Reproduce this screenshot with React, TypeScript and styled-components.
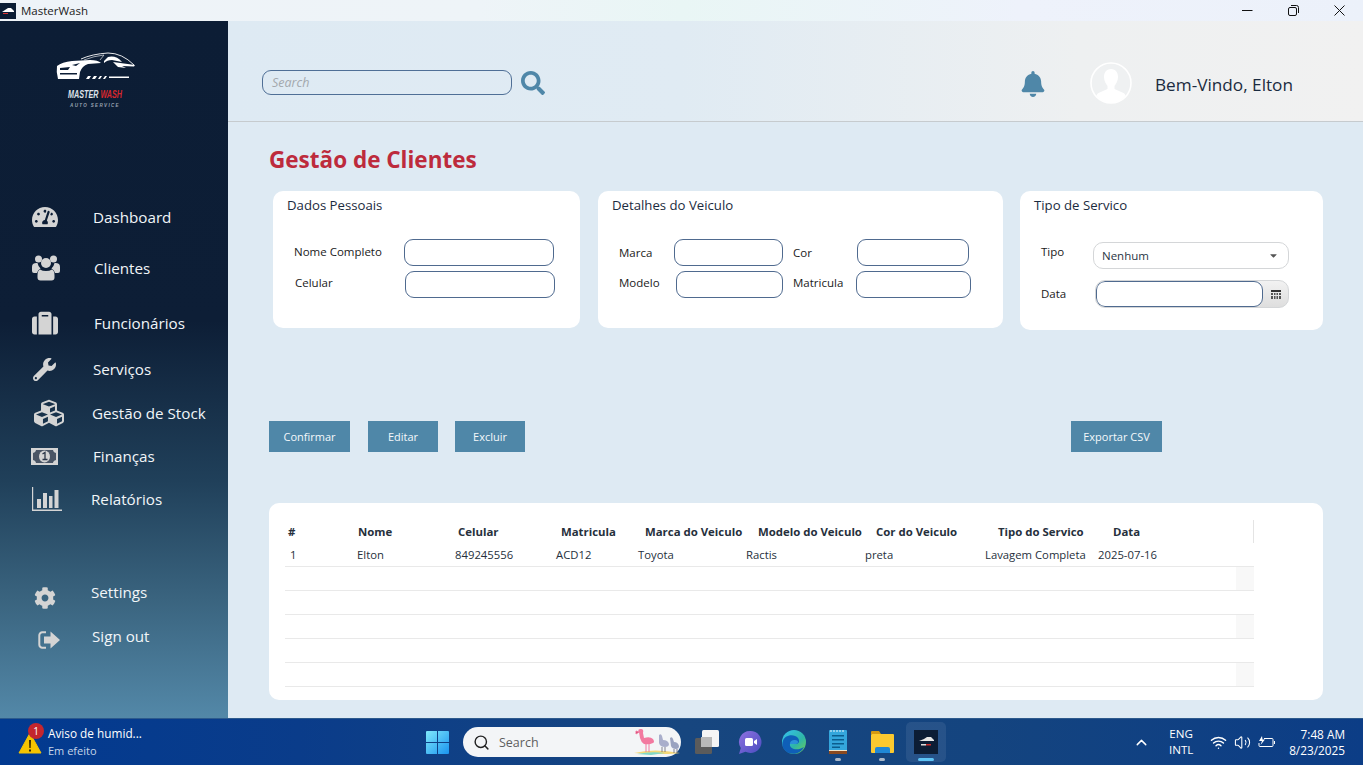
import React from "react";
import styled, { createGlobalStyle } from "styled-components";
import {
  FaTachometerAlt, FaSuitcase, FaWrench, FaCubes,
  FaCog, FaBell, FaSearch, FaCaretDown,
} from "react-icons/fa";
import { Search as LSearch, ChevronUp, Wifi, Volume2 } from "lucide-react";

const Global = createGlobalStyle`
  html, body { margin: 0; padding: 0; height: 100%; overflow: hidden; }
  body { font-family: "Open Sans", "Noto Sans", "Liberation Sans", sans-serif; }
  * { box-sizing: border-box; }
`;

const Win = styled.div`display:flex;flex-direction:column;width:1363px;height:765px;overflow:hidden;`;
const TitleBar = styled.div`
  height:21px;flex:none;display:flex;align-items:center;color:#1a1a1a;font-size:11.5px;
  background:linear-gradient(90deg,#eef3f8 0%,#eef4f8 35%,#e9f6f5 50%,#eef2fb 75%,#ecf1fa 100%);
`;
const TitleLogo = styled.div`width:16px;height:16px;margin-right:5px;background:#0c1d35;display:flex;align-items:center;justify-content:center;`;
const WinControls = styled.div`margin-left:auto;display:flex;margin-right:1px;`;
const WinBtn = styled.div`width:46px;height:21px;display:flex;align-items:center;justify-content:center;color:#111;`;
const Body = styled.div`flex:1;display:flex;min-height:0;`;

const Sidebar = styled.aside`
  width:228px;flex:none;
  background:linear-gradient(180deg,#0c1d35 0%,#0d1e36 43%,#20405a 66%,#3a647f 83%,#5388a8 100%);
`;
const LogoBlock = styled.div`height:178px;padding:31px 0 0 56px;`;
const LogoMaster = styled.div`
  width:78px;margin-top:2px;text-align:center;font:italic 700 10px/11px "Liberation Sans",sans-serif;color:#dfe3ea;white-space:nowrap;
  transform:scaleX(.72);
  span{color:#d8262c;}
`;
const LogoSub = styled.div`
  width:78px;margin-top:1px;text-align:center;font:italic 700 4.5px/9px "Liberation Sans",sans-serif;color:#9aa3b2;letter-spacing:1.35px;white-space:nowrap;
`;
const Nav = styled.nav`display:flex;flex-direction:column;`;
const NavItem = styled.div<{ $gap: number }>`
  height:36px;display:flex;align-items:center;margin-top:${p => p.$gap}px;color:#f1f5f8;font-size:15.2px;white-space:nowrap;
`;
const NavIcon = styled.div<{ $drop?: number; $x: number }>`
  width:90px;flex:none;display:flex;align-items:center;color:#d4d4d4;
  padding-left:${p => p.$x}px;margin-top:${p => (p.$drop || 0) * 2}px;
`;
const NavLabel = styled.span<{ $x: number }>`margin-left:${p => p.$x}px;`;

const Main = styled.main`flex:1;display:flex;flex-direction:column;background:#deeaf3;min-width:0;`;
const Header = styled.header`
  height:101px;flex:none;display:flex;align-items:center;padding:23px 70px 0 34px;
  border-bottom:1px solid #c6cbce;
  background:linear-gradient(90deg,#deeaf3 0%,#e0ebf3 40%,#eef0f1 75%,#f1f1f1 100%);
`;
const SearchField = styled.div`
  width:250px;height:25px;border:1px solid #4f6f96;border-radius:9px;padding-left:9px;
  font-size:12.5px;font-style:italic;color:#a3a8ad;display:flex;align-items:center;
`;
const SearchBtn = styled.div`margin-left:9px;color:#4f87a8;display:flex;`;
const HeaderRight = styled.div`margin-left:auto;display:flex;align-items:center;`;
const BellWrap = styled.div`color:#4f87a8;display:flex;margin:2px 44px 0 0;`;
const Avatar = styled.div`width:42px;height:42px;display:flex;margin-right:23px;`;
const Welcome = styled.div`font-size:17.2px;color:#1b2b40;white-space:nowrap;margin-top:3px;`;

const Content = styled.div`flex:1;padding:22px 40px 0 41px;display:flex;flex-direction:column;`;
const PageTitle = styled.h1`margin:0;height:32px;font-size:22.5px;line-height:32px;font-weight:700;color:#bd2b3c;`;
const Cards = styled.div`display:flex;align-items:flex-start;margin:15px 0 0 4px;`;
const Card = styled.section<{ $w: number; $h: number; $ml?: number }>`
  width:${p => p.$w}px;height:${p => p.$h}px;background:#fff;border-radius:10px;padding:5px 0 0 14px;flex:none;
  margin-left:${p => p.$ml || 0}px;
`;
const CardTitle = styled.div`font-size:13.2px;line-height:18px;color:#1b2b40;white-space:nowrap;`;
const Rows = styled.div<{ $top: number }>`margin:${p => p.$top}px 0 0 7px;display:flex;flex-direction:column;`;
const Row = styled.div<{ $gap?: number }>`display:flex;align-items:center;margin-top:${p => p.$gap || 0}px;`;
const Label = styled.label<{ $w: number; $up?: number; $ind?: number }>`
  width:${p => p.$w}px;flex:none;font-size:11.5px;color:#1a1a1a;white-space:nowrap;
  margin-bottom:${p => p.$up || 0}px;padding-left:${p => p.$ind || 0}px;
`;
const Field = styled.div<{ $w: number }>`width:${p => p.$w}px;height:27px;flex:none;border:1px solid #4f6a8f;border-radius:9px;background:#fff;margin-right:10px;`;
const Select = styled.div`
  width:196px;height:27px;border:1px solid #d4d6d8;border-radius:10px;display:flex;align-items:center;
  padding:0 9px 0 8px;font-size:11.5px;color:#2a3644;justify-content:space-between;
`;
const DateBox = styled.div`
  width:194px;height:28px;margin-left:2px;border:1px solid #d4d6d8;border-radius:10px;display:flex;overflow:hidden;
  background:linear-gradient(180deg,#f2f2f2,#dedede);
`;
const DateInput = styled.div`width:167px;height:26px;border:1px solid #4f6a8f;border-radius:9px;background:#fff;flex:none;`;
const DateBtn = styled.div`flex:1;display:flex;align-items:center;justify-content:center;`;

const Actions = styled.div`display:flex;margin-top:91px;`;
const Btn = styled.button<{ $w: number; $ml?: number; $end?: boolean }>`
  width:${p => p.$w}px;height:31px;border:0;background:#4f87a8;color:#f4f8fb;font:400 11px "Open Sans",sans-serif;padding:0;
  margin-left:${p => p.$end ? "auto" : `${p.$ml || 0}px`};
  ${p => p.$end ? "margin-right:161px;" : ""}
`;
const TableCard = styled.section`margin-top:51px;height:197px;background:#fff;border-radius:10px;padding:17px 0 0 16px;`;
const Table = styled.div`width:969px;`;
const HeadRow = styled.div`
  height:23px;display:grid;grid-template-columns:70px 100px 103px 84px 113px 118px 122px 115px 1fr;padding-left:3px;align-items:center;
  font-size:11.4px;font-weight:700;color:#26303c;white-space:nowrap;border-right:1px solid #e4e4e4;
`;
const TRow = styled.div`
  height:24px;display:grid;grid-template-columns:67px 98px 101px 82px 108px 119px 120px 113px 1fr 18px;padding-left:5px;align-items:center;
  font-size:11.3px;color:#26303c;white-space:nowrap;border-bottom:1px solid #e9e9e9;
`;
const Filler = styled.div<{ $on?: boolean }>`grid-column:10;height:100%;background:${p => p.$on ? "#f8f8f8" : "transparent"};`;

const Taskbar = styled.footer`
  height:47px;flex:none;display:flex;align-items:center;color:#fff;border-top:1px solid #2d5a8c;
  background:linear-gradient(90deg,#023a90 0%,#0a3c8a 22%,#17467f 50%,#14447f 72%,#0c3d86 100%);
`;
const Weather = styled.div`width:415px;flex:none;display:flex;align-items:center;padding-left:18px;`;
const WarnWrap = styled.div`position:relative;width:24px;height:24px;margin-right:6px;margin-top:3px;`;
const WarnBadge = styled.div`
  position:absolute;left:10px;top:-9px;width:16px;height:16px;border-radius:50%;background:#c4262e;font-size:10px;line-height:16px;text-align:center;
`;
const WeatherText = styled.div`font-size:11.8px;line-height:17px;white-space:nowrap;span{display:block;color:#c6d6e8;font-size:11px;}`;
const TaskSlot = styled.div<{ $w?: number }>`width:${p => p.$w || 44}px;height:40px;flex:none;display:flex;align-items:center;justify-content:center;position:relative;`;
const TaskActive = styled(TaskSlot)`background:rgba(255,255,255,.08);border-radius:5px;width:40px;margin:0 2px;`;
const Dot = styled.i<{ $active?: boolean }>`
  position:absolute;bottom:1px;left:50%;transform:translateX(-50%);height:3px;border-radius:2px;
  width:${p => p.$active ? 16 : 6}px;background:${p => p.$active ? "#5ec4f5" : "#a9b8ca"};
`;
const SearchPill = styled.div`
  width:218px;height:30px;margin:0 5px 0 4px;border-radius:15px;background:#f3f5f7;flex:none;display:flex;align-items:center;padding:0 0 0 10px;color:#5e5e5e;font-size:12.5px;
  svg.lens{color:#222;margin-right:9px;}
  svg.fl{margin-left:auto;}
`;
const Tray = styled.div`margin-left:auto;display:flex;align-items:center;padding-right:18px;`;
const Lang = styled.div`width:40px;margin:0 9px 0 11px;text-align:center;font-size:11.6px;line-height:16px;`;
const TrayIcons = styled.div`display:flex;align-items:center;gap:7px;margin-right:14px;`;
const Clock = styled.div`text-align:right;font-size:11.8px;line-height:16px;white-space:nowrap;`;
const Chevron = styled.div`display:flex;`;

const MiniCar = () => (
  <svg width="14" height="9" viewBox="0 0 14 9"><path d="M1 6l3-2 3-2h3l3 3v1H1z" fill="#fff" /><rect x="2" y="7" width="5" height="1" fill="#d33" /></svg>
);
const Car = () => (
  <svg width="80" height="30" viewBox="56 52 80 30" fill="none">
    <path d="M57 66Q62 62 72 61L90 60Q98 60 101 63L88 64Q82 66 80 72L79 79L58 79Q56 72 57 66Z" fill="#fff" />
    <path d="M60 68L70 67L68 70L60 70ZM60 73H77V74.500H60ZM72 65L80 63L76 66Z" fill="#0c1d35" />
    <path d="M81 59Q92 54 108 53Q122 53 134 65" stroke="#fff" strokeWidth=".9" />
    <path d="M84 60Q94 56 104 55L100 60" stroke="#fff" strokeWidth=".6" />
    <path d="M104 61L108 57Q116 55 122 62L112 60Q107 60 104 63Z" fill="#fff" />
    <path d="M113 62L135 65L134 66.500L122 66L126 68L118 67Z" fill="#fff" />
    <path d="M86 79l2-3h3l-2 3zM92 79l2-3h3l-2 3zM98 79l2-3h2l-2 3zM103 79l2-3h2l-2 3zM109 76.500h20v1.500h-20z" fill="#fff" />
  </svg>
);
const UserPic = () => (
  <svg width="42" height="42" viewBox="0 0 42 42">
    <circle cx="21" cy="21" r="20" fill="#eff1f2" stroke="#fff" strokeWidth="1.6" />
    <path d="M21 7c5 0 7 4 7 8 0 4-2 7-3.500 9v3l9 4c1 .5 2 2 2 3a19 19 0 0 1-29 0c0-1 1-2.500 2-3l9-4v-3C16 22 14 19 14 15c0-4 2-8 7-8z" fill="#fff" />
  </svg>
);
const UsersIcon = () => (
  <svg width="28" height="26" viewBox="0 0 28 26" fill="currentColor">
    <circle cx="6.500" cy="4" r="3.500" /><circle cx="21.500" cy="4" r="3.500" /><circle cx="14" cy="8" r="5" />
    <path d="M1 9q2-1.500 4.500-1 .5 3 3 5.500-3 1.500-3.500 4.500H2q-2 0-2-2v-4q0-2 1-3zM27 9q-2-1.500-4.500-1-.5 3-3 5.500 3 1.500 3.500 4.500h3q2 0 2-2v-4q0-2-1-3z" />
    <path d="M8 14.500q2.500 1.500 6 1.500t6-1.500q2.500 1 2.500 6v2q0 3-3 3h-11q-3 0-3-3v-2q0-5 2.500-6z" />
  </svg>
);
const MoneyIcon = () => (
  <svg width="27" height="17" viewBox="0 0 27 17">
    <path fillRule="evenodd" fill="currentColor" d="M0 0h27v17H0zM5 2q0 3-3 3v7q3 0 3 3h17q0-3 3-3V5q-3 0-3-3z" />
    <path fill="#4a5565" d="M5 2h17q0 3 3 3v7q-3 0-3 3H5q0-3-3-3V5q3 0 3-3z" />
    <ellipse cx="13.500" cy="8.500" rx="5.500" ry="6" fill="currentColor" />
    <path d="M11.500 6l2.500-1.500v7M11.500 11.500h5" stroke="#2b3648" strokeWidth="1.300" fill="none" />
  </svg>
);
const ChartIcon = () => (
  <svg width="30" height="24" viewBox="0 0 30 24" fill="currentColor">
    <path d="M0 0h1.200v22.500H30V24H0z" />
    <rect x="5" y="12" width="4" height="9" /><rect x="11" y="6" width="4" height="15" />
    <rect x="17" y="9" width="3.500" height="12" /><rect x="22.500" y="3" width="4" height="18" />
  </svg>
);
const SignOutIcon = () => (
  <svg width="22" height="18" viewBox="0 0 22 18">
    <path d="M8 1.300H4.500A3 3 0 0 0 1.300 4.500v9a3 3 0 0 0 3.200 3.200H8" fill="none" stroke="currentColor" strokeWidth="2" />
    <path d="M6 5.500H12.500V.5l9.500 8.500-9.500 8.500v-5H6z" fill="currentColor" />
  </svg>
);
const GridIcon = () => (
  <svg width="10" height="9" viewBox="0 0 10 9">
    <rect width="10" height="2" fill="#333" />
    <path d="M0 3h2v2H0zM3 3h1.500v2H3zM5.500 3H7v2H5.500zM8 3h2v2H8zM0 6h2v3H0zM3 6h1.500v3H3zM5.500 6H7v3H5.500zM8 6h2v3H8z" fill="#555" />
  </svg>
);
const Warn = () => (
  <svg width="24" height="22" viewBox="0 0 24 22">
    <path d="M12 1L23 21H1z" fill="#f5c400" stroke="#f5c400" strokeLinejoin="round" />
    <path d="M11 8h2l-.3 8h-1.400zM11 17.500h2v2h-2z" fill="#3a2c00" />
  </svg>
);
const Start = () => (
  <svg width="23" height="23" viewBox="0 0 23 23">
    <defs><linearGradient id="st" x1="0" y1="0" x2="1" y2="1"><stop offset="0" stopColor="#7fe8fb" /><stop offset="1" stopColor="#1a94f0" /></linearGradient></defs>
    <path d="M1 0h10v11H0V1a1 1 0 0 1 1-1zM12 0h10a1 1 0 0 1 1 1v10H12zM0 12h11v11H1a1 1 0 0 1-1-1zM12 12h11v10a1 1 0 0 1-1 1H12z" fill="url(#st)" />
  </svg>
);
const Flamingo = () => (
  <svg className="fl" width="48" height="26" viewBox="0 0 48 26">
    <path d="M1 24q20-5 46 0q-12 2-46 0z" fill="#f5d878" />
    <path d="M4 25q14-3 28-1l-14 2z" fill="#7fd8c8" />
    <path d="M6 3q-2-3 2-3 3 0 2 4l1 5q6-2 9 1 2 3 0 4-4 2-9 1-3-2-4-6z" fill="#f279a0" />
    <path d="M3 2l3 1-3 2zM13 15v8M16 15v8" stroke="#f279a0" strokeWidth="1" fill="#c2385f" />
    <path d="M26 6q2-2 3 1l1 4q5 0 6 4 0 3-4 3-5 0-6-4z" fill="#a9aecb" />
    <path d="M29 18v5M32 18v5M41 20v4M44 20v4" stroke="#667" strokeWidth=".8" />
    <path d="M37 9q2-2 3 1l1 3q4 0 5 4 0 3-3 3-4 0-5-3z" fill="#9aa3c0" />
  </svg>
);
const TaskView = () => (
  <svg width="24" height="24" viewBox="0 0 24 24">
    <rect x="0" y="8" width="17" height="16" rx="1.500" fill="#5b5b5b" />
    <rect x="7" y="0" width="17" height="17" rx="1.500" fill="#f5f5f5" />
    <rect x="6" y="7" width="11" height="10" fill="#b9b9b9" />
  </svg>
);
const Meet = () => (
  <svg width="24" height="24" viewBox="0 0 24 24">
    <defs><linearGradient id="mt" x1="0" y1="0" x2="1" y2="1"><stop offset="0" stopColor="#8d72e0" /><stop offset="1" stopColor="#4a4cc0" /></linearGradient></defs>
    <path d="M12.500 1a11 11 0 1 1-5 20.800L1 24l1.800-6A11 11 0 0 1 12.500 1z" fill="url(#mt)" />
    <rect x="7" y="8" width="8" height="8" rx="1.500" fill="#fff" /><path d="M16 11l3-2v6l-3-2z" fill="#fff" />
  </svg>
);
const Edge = () => (
  <svg width="24" height="24" viewBox="0 0 24 24">
    <defs><linearGradient id="ed" x1="0" y1="0" x2="1" y2="1"><stop offset="0" stopColor="#35c1f1" /><stop offset=".6" stopColor="#2fb5a6" /><stop offset="1" stopColor="#72d24e" /></linearGradient></defs>
    <circle cx="12" cy="12" r="12" fill="url(#ed)" />
    <path d="M1 11C2 5 12 3 16 8c2 3 1 6-2 6H8c-1 4 6 8 14 3-3 6-9 8-15 6C2 21-1 16 1 11z" fill="#0f5fb8" />
    <path d="M8 14c0-3 2-4 5-4 2 0 3 1 3 2 0 1-1 2-2 2z" fill="#2b8fd8" />
  </svg>
);
const Notepad = () => (
  <svg width="18" height="24" viewBox="0 0 18 24">
    <rect width="18" height="24" rx="1" fill="#34a6dc" />
    <rect y="21" width="18" height="3" fill="#8a4a20" /><rect y="20" width="18" height="1" fill="#f2e4c8" />
    <path d="M3 5h12v1.500H3zM3 9h12v1.500H3zM3 13h12v1.500H3zM3 16.500h8V18H3z" fill="#0b5d8e" />
    <path d="M2 0v2M5 0v2M8 0v2M11 0v2M14 0v2" stroke="#eaf5fb" strokeWidth="1" />
  </svg>
);
const Folder = () => (
  <svg width="23" height="22" viewBox="0 0 23 22">
    <path d="M0 1a1 1 0 0 1 1-1h7l2 3H0z" fill="#d59a12" />
    <rect y="3" width="23" height="19" rx="1" fill="#fbc92f" />
    <path d="M4 22v-4a2 2 0 0 1 2-2h11a2 2 0 0 1 2 2v4z" fill="#1f87d6" />
  </svg>
);
const AppTile = () => (
  <svg width="24" height="24" viewBox="0 0 24 24">
    <rect width="24" height="24" fill="#0c1d35" />
    <path d="M5 11l5-2 3-2h4l3 3v1H5z" fill="#e8e8e8" />
    <rect x="7" y="14" width="5" height="1.500" fill="#ddd" /><rect x="12" y="14" width="5" height="1.500" fill="#c92a2a" />
  </svg>
);
const Battery = () => (
  <svg width="17" height="13" viewBox="0 0 17 13" fill="none" stroke="#fff" strokeWidth="1">
    <path d="M6 2.500h8a1 1 0 0 1 1 1v6a1 1 0 0 1-1 1H2a1 1 0 0 1-1-1V7" />
    <path d="M16.500 5v3" />
    <path d="M4 0L1 5h3L2.500 9 7 3.500H4.500z" fill="#fff" stroke="none" />
  </svg>
);
const MinIcon = () => <svg width="11" height="11" viewBox="0 0 11 11"><path d="M0 5.500h10.500" stroke="currentColor" strokeWidth="1" /></svg>;
const RestoreIcon = () => (
  <svg width="11" height="11" viewBox="0 0 11 11" fill="none" stroke="currentColor" strokeWidth="1">
    <rect x=".5" y="2.500" width="8" height="8" rx="1.500" /><path d="M3 .5h5.500a2 2 0 0 1 2 2V8" />
  </svg>
);
const CloseIcon = () => <svg width="11" height="11" viewBox="0 0 11 11"><path d="M.5.5l10 10M10.500.5l-10 10" stroke="currentColor" strokeWidth="1" /></svg>;

const headers = ["#", "Nome", "Celular", "Matricula", "Marca do Veiculo", "Modelo do Veiculo", "Cor do Veiculo", "Tipo do Servico", "Data"];
const first = ["1", "Elton", "849245556", "ACD12", "Toyota", "Ractis", "preta", "Lavagem Completa", "2025-07-16"];

const nav = [
  { l: "Dashboard", g: 0, x: 3, ic: <FaTachometerAlt size={26} />, px: 32 },
  { l: "Clientes", g: 15, x: 4, ic: <UsersIcon />, px: 32 },
  { l: "Funcionários", g: 19, x: 4, ic: <FaSuitcase size={26} />, px: 32 },
  { l: "Serviços", g: 10, x: 3, ic: <FaWrench size={23} />, px: 33 },
  { l: "Gestão de Stock", g: 8, x: 2, ic: <FaCubes size={30} />, px: 34 },
  { l: "Finanças", g: 7, x: 3, ic: <MoneyIcon />, px: 31 },
  { l: "Relatórios", g: 7, x: 1, ic: <ChartIcon />, px: 32 },
  { l: "Settings", g: 57, x: 1, ic: <FaCog size={22} />, px: 34, d: 6 },
  { l: "Sign out", g: 8, x: 2, ic: <SignOutIcon />, px: 38, d: 4 },
];

export default function App() {
  return (
    <Win>
      <Global />
      <TitleBar>
        <TitleLogo><MiniCar /></TitleLogo>
        MasterWash
        <WinControls>
          <WinBtn><MinIcon /></WinBtn>
          <WinBtn><RestoreIcon /></WinBtn>
          <WinBtn><CloseIcon /></WinBtn>
        </WinControls>
      </TitleBar>
      <Body>
        <Sidebar>
          <LogoBlock>
            <Car />
            <LogoMaster>MASTER <span>WASH</span></LogoMaster>
            <LogoSub>AUTO SERVICE</LogoSub>
          </LogoBlock>
          <Nav>
            {nav.map(n => (
              <NavItem key={n.l} $gap={n.g}>
                <NavIcon $x={n.px} $drop={n.d}>{n.ic}</NavIcon>
                <NavLabel $x={n.x}>{n.l}</NavLabel>
              </NavItem>
            ))}
          </Nav>
        </Sidebar>
        <Main>
          <Header>
            <SearchField>Search</SearchField>
            <SearchBtn><FaSearch size={24} /></SearchBtn>
            <HeaderRight>
              <BellWrap><FaBell size={26} /></BellWrap>
              <Avatar><UserPic /></Avatar>
              <Welcome>Bem-Vindo, Elton</Welcome>
            </HeaderRight>
          </Header>
          <Content>
            <PageTitle>Gestão de Clientes</PageTitle>
            <Cards>
              <Card $w={307} $h={137}>
                <CardTitle>Dados Pessoais</CardTitle>
                <Rows $top={25}>
                  <Row><Label $w={110} $up={2}>Nome Completo</Label><Field $w={150} /></Row>
                  <Row $gap={5}><Label $w={111} $up={4} $ind={1}>Celular</Label><Field $w={150} /></Row>
                </Rows>
              </Card>
              <Card $w={405} $h={137} $ml={18}>
                <CardTitle>Detalhes do Veiculo</CardTitle>
                <Rows $top={25}>
                  <Row><Label $w={55}>Marca</Label><Field $w={109} /><Label $w={64}>Cor</Label><Field $w={112} /></Row>
                  <Row $gap={5}><Label $w={57} $up={5}>Modelo</Label><Field $w={107} /><Label $w={63} $up={5}>Matricula</Label><Field $w={115} /></Row>
                </Rows>
              </Card>
              <Card $w={303} $h={139} $ml={17}>
                <CardTitle>Tipo de Servico</CardTitle>
                <Rows $top={28}>
                  <Row><Label $w={52} $up={8}>Tipo</Label><Select>Nenhum<FaCaretDown size={11} color="#555" /></Select></Row>
                  <Row $gap={11}><Label $w={52} $up={2}>Data</Label><DateBox><DateInput /><DateBtn><GridIcon /></DateBtn></DateBox></Row>
                </Rows>
              </Card>
            </Cards>
            <Actions>
              <Btn $w={81}>Confirmar</Btn>
              <Btn $w={70} $ml={18}>Editar</Btn>
              <Btn $w={70} $ml={17}>Excluir</Btn>
              <Btn $w={91} $end>Exportar CSV</Btn>
            </Actions>
            <TableCard>
              <Table>
                <HeadRow>{headers.map(h => <span key={h}>{h}</span>)}</HeadRow>
                <TRow>{first.map(c => <span key={c}>{c}</span>)}<Filler /></TRow>
                {[0, 1, 2, 3, 4].map(i => <TRow key={i}><Filler $on={i % 2 === 0} /></TRow>)}
              </Table>
            </TableCard>
          </Content>
        </Main>
      </Body>
      <Taskbar>
        <Weather>
          <WarnWrap><Warn /><WarnBadge>1</WarnBadge></WarnWrap>
          <WeatherText>Aviso de humid...<span>Em efeito</span></WeatherText>
        </Weather>
        <TaskSlot><Start /></TaskSlot>
        <SearchPill>
          <LSearch className="lens" size={17} strokeWidth={2} />
          Search
          <Flamingo />
        </SearchPill>
        <TaskSlot $w={42}><TaskView /></TaskSlot>
        <TaskSlot><Meet /></TaskSlot>
        <TaskSlot><Edge /></TaskSlot>
        <TaskSlot><Notepad /><Dot /></TaskSlot>
        <TaskSlot><Folder /><Dot /></TaskSlot>
        <TaskActive><AppTile /><Dot $active /></TaskActive>
        <Tray>
          <Chevron><ChevronUp size={17} /></Chevron>
          <Lang>ENG<br />INTL</Lang>
          <TrayIcons>
            <Wifi size={17} />
            <Volume2 size={17} strokeWidth={1.5} />
            <Battery />
          </TrayIcons>
          <Clock>7:48 AM<br />8/23/2025</Clock>
        </Tray>
      </Taskbar>
    </Win>
  );
}
